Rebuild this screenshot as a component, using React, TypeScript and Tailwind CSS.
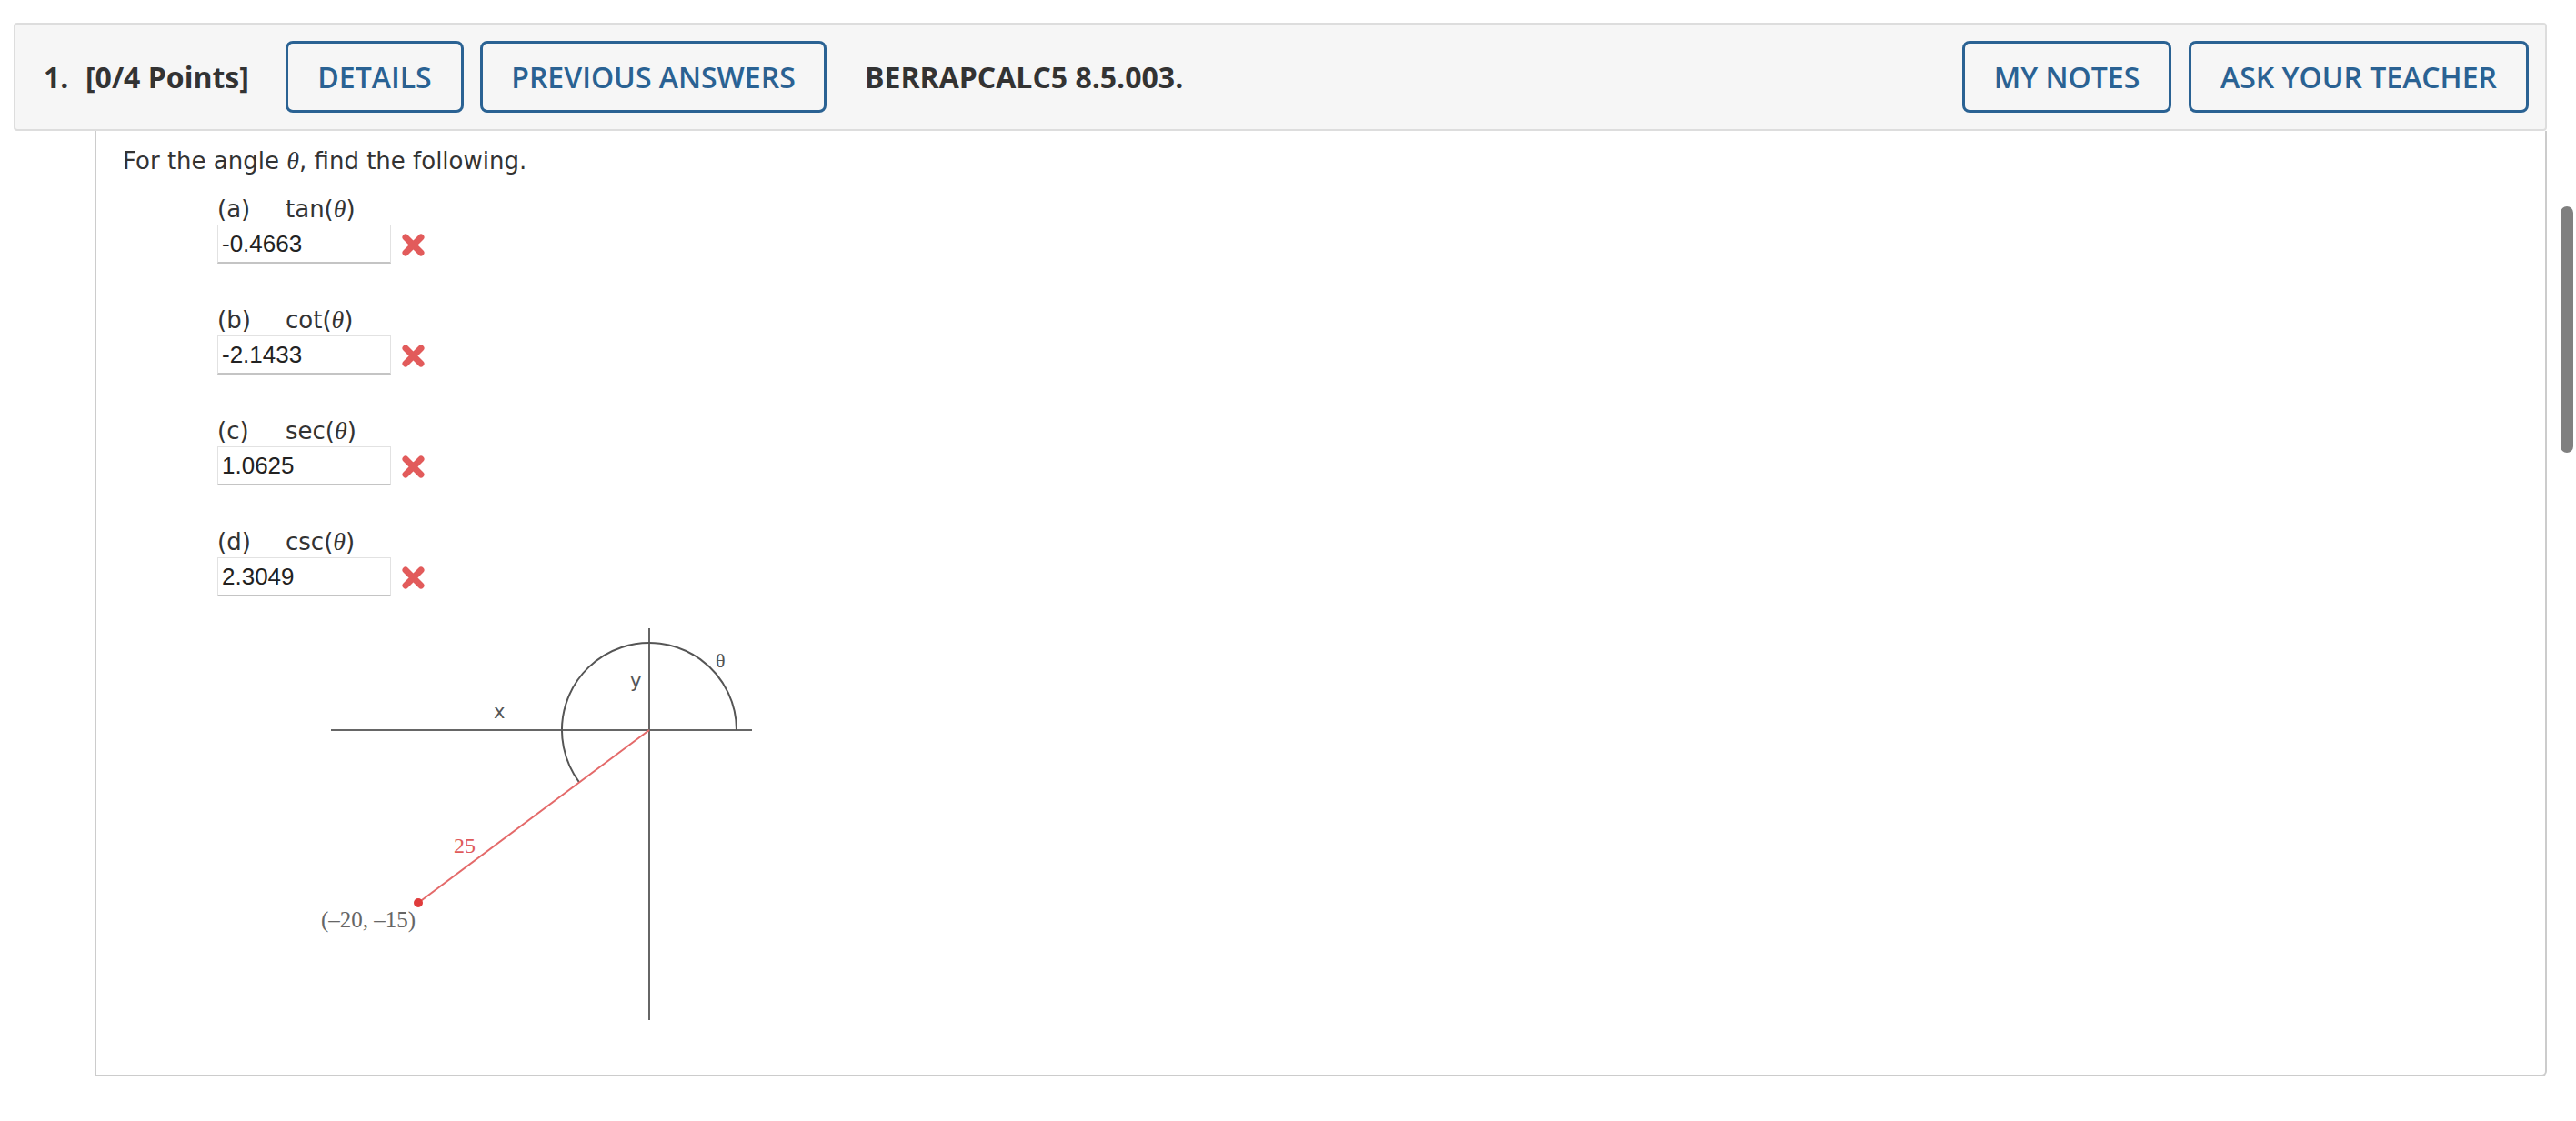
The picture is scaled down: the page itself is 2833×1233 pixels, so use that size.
import React from 'react';

const parts = [
  { key: '(a)', fn: 'tan', value: '-0.4663' },
  { key: '(b)', fn: 'cot', value: '-2.1433' },
  { key: '(c)', fn: 'sec', value: '1.0625' },
  { key: '(d)', fn: 'csc', value: '2.3049' },
];

const Theta = () => (
  <span className="italic font-['Liberation_Serif','DejaVu_Serif',serif] text-[28px]">θ</span>
);

const WrongMark = () => (
  <svg className="w-[27px] h-[27px] ml-[11px] mt-[9px]" viewBox="0 0 27 27">
    <path d="M5 5L22 22M22 5L5 22" stroke="#e25b5b" strokeWidth="7" strokeLinecap="round" />
  </svg>
);

const HeaderButton = ({ label, width }: { label: string; width: string }) => (
  <button
    className={`${width} h-[79px] shrink-0 rounded-[8px] border-[3px] border-[#2a6293] text-[#2a6293] text-[32px] font-semibold bg-transparent`}
  >
    {label}
  </button>
);

// angle diagram, drawn in its own 500x450 box
const AngleFigure = () => (
  <svg width="500" height="450" viewBox="0 0 500 450" className="ml-[205px] mt-[24px] block">
    <line x1="24" y1="123" x2="487" y2="123" stroke="#666" strokeWidth="2" />
    <line x1="374" y1="11" x2="374" y2="442" stroke="#666" strokeWidth="2" />
    <path d="M470 123 A96 96 0 1 0 297.2 180.6" fill="none" stroke="#555" strokeWidth="2" />
    <line x1="374" y1="123" x2="120" y2="313" stroke="#e46a6a" strokeWidth="2" />
    <circle cx="120" cy="313" r="5" fill="#e03c3c" />
    <text x="13" y="340" fontSize="25" fill="#666" fontFamily="Liberation Serif, serif">(–20, –15)</text>
    <text x="159" y="258" fontSize="24" fill="#e05a5a" fontFamily="Liberation Serif, serif">25</text>
    <text x="203" y="110" fontSize="21" fill="#555" fontFamily="DejaVu Sans, sans-serif">x</text>
    <text x="353" y="76" fontSize="21" fill="#555" fontFamily="DejaVu Sans, sans-serif">y</text>
    <text x="447" y="54" fontSize="22" fill="#555" fontFamily="Liberation Serif, serif">θ</text>
  </svg>
);

export default function App() {
  return (
    <div className="relative min-h-screen bg-white">
      <div className="pt-[25px] pl-[15px] w-[2801px]">
        <div className="h-[119px] flex items-center border-2 border-[#dddddd] bg-[#f6f6f6] rounded-[4px] pl-[31px] pr-[18px] font-['Open_Sans',sans-serif] text-[#333]">
          <span className="w-[46px] text-[32px] font-bold">1.</span>
          <span className="w-[220px] text-[32px] font-bold">[0/4 Points]</span>
          <div className="flex gap-[18px]">
            <HeaderButton label="DETAILS" width="w-[196px]" />
            <HeaderButton label="PREVIOUS ANSWERS" width="w-[381px]" />
          </div>
          <span className="ml-[42px] text-[32px] font-bold">BERRAPCALC5 8.5.003.</span>
          <div className="ml-auto flex gap-[19px]">
            <HeaderButton label="MY NOTES" width="w-[230px]" />
            <HeaderButton label="ASK YOUR TEACHER" width="w-[374px]" />
          </div>
        </div>

        <div className="ml-[89px] h-[1040px] border-l-2 border-r-2 border-b-2 border-[#cccccc] rounded-br-[6px] pl-[29px] pt-[18px] font-['DejaVu_Sans','Verdana',sans-serif] text-[#333]">
          <p className="text-[26px] leading-[30px]">
            For the angle <Theta />, find the following.
          </p>

          <div className="ml-[104px] mt-[23px] flex flex-col gap-[47px]">
            {parts.map((p) => (
              <div key={p.key} className="flex flex-col gap-[2px]">
                <div className="flex text-[26px] leading-[30px]">
                  <span className="w-[75px]">{p.key}</span>
                  <span>
                    {p.fn}(<Theta />)
                  </span>
                </div>
                <div className="flex">
                  <div className="w-[191px] h-[43px] border border-[#e2e2e2] border-b-2 border-b-[#c4c4c4] bg-white pl-[4px] flex items-center font-['Liberation_Sans',Arial,sans-serif] text-[26px] text-[#222]">
                    {p.value}
                  </div>
                  <WrongMark />
                </div>
              </div>
            ))}
          </div>

          <AngleFigure />
        </div>
      </div>

      <div className="absolute left-[2816px] top-[227px] w-[14px] h-[271px] rounded-full bg-[#808080]" />
    </div>
  );
}
